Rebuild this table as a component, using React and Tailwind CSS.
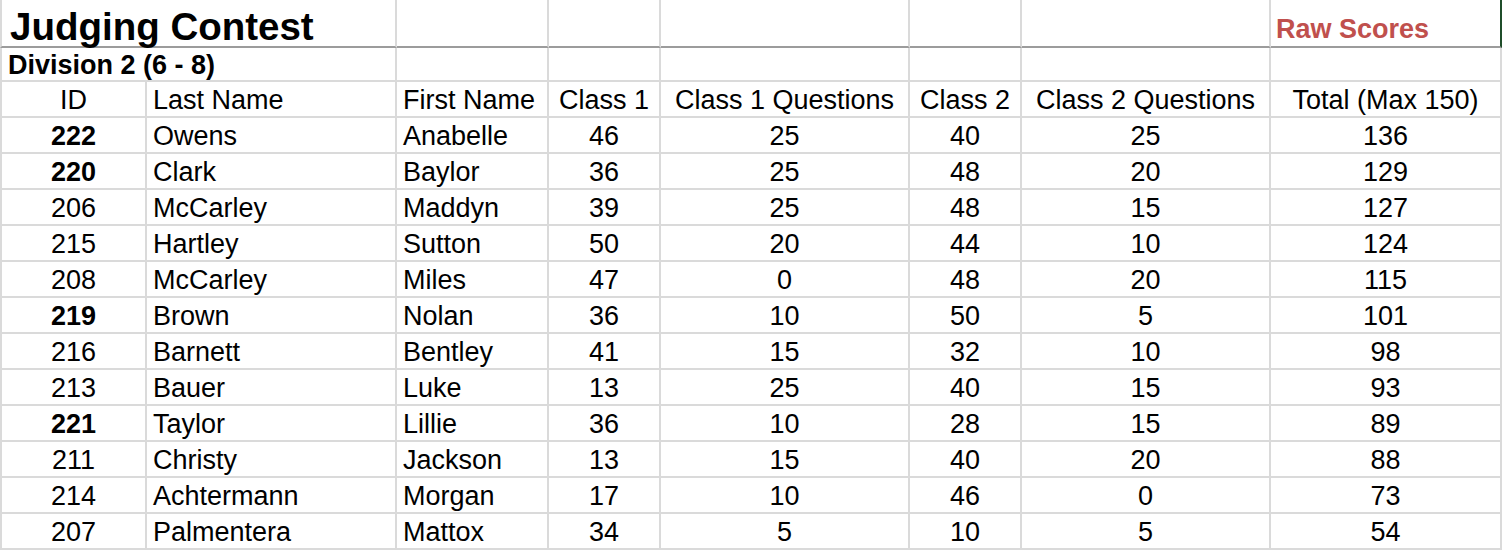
const rows = [
  { id: '222', bold: true, last: 'Owens', first: 'Anabelle', c1: 46, q1: 25, c2: 40, q2: 25, total: 136 },
  { id: '220', bold: true, last: 'Clark', first: 'Baylor', c1: 36, q1: 25, c2: 48, q2: 20, total: 129 },
  { id: '206', last: 'McCarley', first: 'Maddyn', c1: 39, q1: 25, c2: 48, q2: 15, total: 127 },
  { id: '215', last: 'Hartley', first: 'Sutton', c1: 50, q1: 20, c2: 44, q2: 10, total: 124 },
  { id: '208', last: 'McCarley', first: 'Miles', c1: 47, q1: 0, c2: 48, q2: 20, total: 115 },
  { id: '219', bold: true, last: 'Brown', first: 'Nolan', c1: 36, q1: 10, c2: 50, q2: 5, total: 101 },
  { id: '216', last: 'Barnett', first: 'Bentley', c1: 41, q1: 15, c2: 32, q2: 10, total: 98 },
  { id: '213', last: 'Bauer', first: 'Luke', c1: 13, q1: 25, c2: 40, q2: 15, total: 93 },
  { id: '221', bold: true, last: 'Taylor', first: 'Lillie', c1: 36, q1: 10, c2: 28, q2: 15, total: 89 },
  { id: '211', last: 'Christy', first: 'Jackson', c1: 13, q1: 15, c2: 40, q2: 20, total: 88 },
  { id: '214', last: 'Achtermann', first: 'Morgan', c1: 17, q1: 10, c2: 46, q2: 0, total: 73 },
  { id: '207', last: 'Palmentera', first: 'Mattox', c1: 34, q1: 5, c2: 10, q2: 5, total: 54 },
]

const grid = 'grid grid-cols-[147px_250px_152px_112px_249px_112px_249px_231px]'
const cell = 'h-[36px] border-r-2 border-b-2 border-[#dadada] flex items-center leading-none pt-[3px]'
const left = cell + ' justify-start pl-[6px]'
const mid = cell + ' justify-center'

const App = () => {
  return (
    <div className="w-[1502px] h-[550px] overflow-hidden bg-white text-black text-[27px]" style={{ fontFamily: '"Liberation Sans", Arial, sans-serif' }}>
      {/* title row */}
      <div className={grid + ' h-[48px]'}>
        <div className="col-span-2 h-[48px] border-l-2 border-b-2 border-r-2 border-l-[#dadada] border-r-[#dadada] border-b-[#9c9c9c] flex items-end pl-[8px] leading-none">
          <span className="text-[38.5px] font-bold whitespace-nowrap">Judging Contest</span>
        </div>
        <div className="h-[48px] border-r-2 border-b-2 border-r-[#dadada] border-b-[#9c9c9c]"></div>
        <div className="h-[48px] border-r-2 border-b-2 border-r-[#dadada] border-b-[#9c9c9c]"></div>
        <div className="h-[48px] border-r-2 border-b-2 border-r-[#dadada] border-b-[#9c9c9c]"></div>
        <div className="h-[48px] border-r-2 border-b-2 border-r-[#dadada] border-b-[#9c9c9c]"></div>
        <div className="h-[48px] border-r-2 border-b-2 border-r-[#dadada] border-b-[#9c9c9c]"></div>
        <div className="h-[48px] border-r-2 border-b-2 border-r-[#1f4d2a] border-b-[#9c9c9c] flex items-end pb-[3px] pl-[5px] leading-none">
          <span className="font-bold text-[#c0504d] whitespace-nowrap">Raw Scores</span>
        </div>
      </div>

      {/* division row */}
      <div className={grid}>
        <div className="col-span-2 h-[34px] border-l-2 border-r-2 border-b-2 border-[#dadada] flex items-center pl-[6px] pt-[2px] leading-none">
          <span className="font-bold whitespace-nowrap">Division 2 (6 - 8)</span>
        </div>
        {[0, 1, 2, 3, 4, 5].map((i) => (
          <div key={i} className="h-[34px] border-r-2 border-b-2 border-[#dadada]"></div>
        ))}
      </div>

      {/* header */}
      <div className={grid}>
        <div className={mid + ' border-l-2'}>ID</div>
        <div className={left}>Last Name</div>
        <div className={left}>First Name</div>
        <div className={mid}>Class 1</div>
        <div className={mid}>Class 1 Questions</div>
        <div className={mid}>Class 2</div>
        <div className={mid}>Class 2 Questions</div>
        <div className={mid}>Total (Max 150)</div>
      </div>

      {rows.map((r) => (
        <div key={r.id} className={grid}>
          <div className={mid + ' border-l-2' + (r.bold ? ' font-bold' : '')}>{r.id}</div>
          <div className={left}>{r.last}</div>
          <div className={left}>{r.first}</div>
          <div className={mid}>{r.c1}</div>
          <div className={mid}>{r.q1}</div>
          <div className={mid}>{r.c2}</div>
          <div className={mid}>{r.q2}</div>
          <div className={mid}>{r.total}</div>
        </div>
      ))}
    </div>
  )
}

export default App
